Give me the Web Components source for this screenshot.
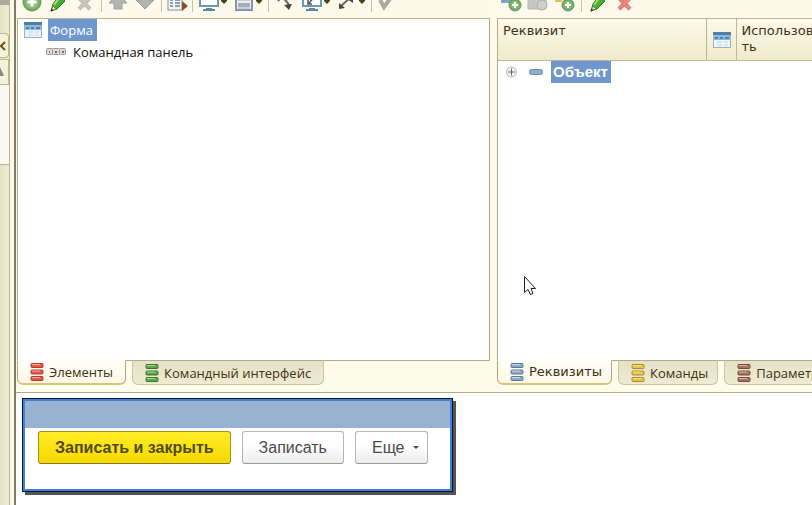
<!DOCTYPE html>
<html lang="ru">
<head>
<meta charset="utf-8">
<title>Форма</title>
<style>
html, body { height: 100%; margin: 0; overflow: hidden; }
body { font: 13px/16px "Open Sans", "Noto Sans", sans-serif; color: #413216; background: #fdfbea; }
</style>
</head>
<body>
<form-designer></form-designer>
<script>
const define = (name, html, init) => customElements.define(name, class extends HTMLElement {
  connectedCallback() {
    if (this.shadowRoot) return;
    const t = document.createElement('template');
    t.innerHTML = html;
    this.attachShadow({ mode: 'open' }).append(t.content.cloneNode(true));
    if (init) init(this, this.shadowRoot);
  }
});

const plus = (x, y, r) => `<circle cx="${x}" cy="${y}" r="${r}" fill="#72ab62" stroke="#6a9160"/><circle cx="${x}" cy="${y}" r="${r - 2}" fill="#8bbd79"/><path d="M${x - r / 2} ${y}h${r}M${x} ${y - r / 2}v${r}" stroke="#fff" stroke-width="${r > 8 ? 3 : 2}"/>`;
const pencil = '<path d="M5 4L11-4L17 1L9 9L3 11Z" fill="#48ad2c" stroke="#27771b"/><path d="M6 5L12-3" stroke="#a0dc79" stroke-width="2"/><path d="M3 11L5 6L8 9Z" fill="#e4d9b6" stroke="#58764b" stroke-width=".7"/><path d="M2.500 11.500l1-3 2 2z" fill="#243a1c"/>';
const cross = (a, b) => `<path d="M4 9L15-2M4-2L15 9" stroke="${b}" stroke-width="4"/><path d="M4 9L15-2M4-2L15 9" stroke="${a}" stroke-width="3"/>`;
const drop = '<path d="M22-1h6v2l-3 3l-3-3z" fill="#49421a"/>';
const monitor = '<rect x="1" y="-8" width="18" height="14" fill="#fff" stroke="#6c98b8" stroke-width="2"/><path d="M7 8h6v1h-6zM4 9h12v2H4z" fill="#6287a3"/>';
const icons = {
  add: plus(11, 2, 9),
  pencil,
  remove: cross('#c9c3b8', '#b9b5ab'),
  del: cross('#e8867b', '#d95f55'),
  up: '<path d="M6 9V3H1L10-7L19 3H14V9Z" fill="#b3b3b0" stroke="#a0a09c"/>',
  down: '<path d="M6-6V0H1L10 9L19 0H14V-6Z" fill="#b3b3b0" stroke="#a0a09c"/>',
  table: '<rect x="0" y="-5" width="14" height="15" fill="#f6f6f2" stroke="#7891a5"/><path d="M2 0h3m2 0h5M2 3h3m2 0h5M2 6h3m2 0h5" stroke="#8c9eb0" stroke-width="2"/><path d="M14 1l6 5-6 5z" fill="#8e4c2b"/>',
  monitor: monitor + drop,
  list: '<rect x="2" y="-6" width="16" height="16" fill="#eef0f1" stroke="#8299ad" stroke-width="2"/><path d="M4 0h12M4 8h12" stroke="#a4adb6"/><path d="M4 3h12v4H4z" fill="#a6adb5"/>' + drop,
  route: '<path d="M3 1Q6-3 9-1Q13 2 14 6" fill="none" stroke="#666" stroke-width="2"/><path d="M9 5l8-1-3 6z" fill="#4b4643"/>',
  screen: monitor + '<path d="M7 3L14-5M6 0v4h4" fill="none" stroke="#555" stroke-width="1.500"/>' + drop,
  diag: '<path d="M4 6L14-3" stroke="#666" stroke-width="2"/><path d="M2 9V3l6 5zM10-1l6-2v6z" fill="#4b4643"/>' + drop,
  check: '<path d="M2 0L6 7L14-4" fill="none" stroke="#aaa9a4" stroke-width="4"/>',
  addAttr: '<rect x="0" y="-3" width="12" height="6" fill="#7ea3c5"/>' + plus(14, 5, 6),
  copy: '<path d="M0-4h12l6 4v9H0z" fill="#c7c8c4" stroke="#b5b6b3"/><circle cx="14" cy="5" r="5" fill="#d0d0cb" stroke="#aaa"/>',
  addCol: '<rect x="0" y="-4" width="7" height="6" fill="#e4bf50"/><rect x="9" y="-4" width="7" height="5" fill="#dfa845"/>' + plus(13, 5, 6)
};

define('tool-button', `<style>
:host { display: block; flex: none; }
button { display: block; width: var(--w, 20px); height: 18px; padding: 0; border: 0; background: none; }
svg { display: block; width: 100%; height: 18px; overflow: visible; }
</style><button type="button"><svg></svg></button>`, (el, r) => {
  r.querySelector('svg').innerHTML = icons[el.getAttribute('icon')];
  r.querySelector('button').setAttribute('aria-label', el.getAttribute('label'));
});

define('tool-bar', `<style>
:host { display: flex; align-items: flex-start; gap: 7px; height: 18px; flex: none; padding-left: var(--start, 4px); overflow: hidden; border-bottom: 1px solid #b9b58d; background: #fdfaeb; }
::slotted(hr) { width: 1px; height: 12px; margin: 0 -1px; border: 0; background: #c9c3a0; flex: none; }
</style><slot></slot>`);

define('form-icon', `<style>:host { display: block; flex: none; width: 18px; height: 18px; } svg { display: block; }</style>
<svg width="18" height="18"><rect x=".5" y="1.500" width="17" height="15" fill="#eef5fa" stroke="#98b0c2"/><path d="M0 1h18v3H0z" fill="#507da4"/><path d="M1 4h16v5H1z" fill="#8db8dc"/><path d="M2 7h3m2 0h3m2 0h4" stroke="#4c86b8" stroke-width="2"/><path d="M4 11h5m2 0h4M4 14h5m2 0h4" stroke="#c3d1dd"/></svg>`);

define('panel-icon', `<style>:host { display: block; flex: none; width: 20px; height: 8px; } svg { display: block; }</style>
<svg width="20" height="8"><g fill="#ddd" stroke="#969696"><rect x=".5" y=".5" width="6" height="6" rx="1"/><rect x="6.500" y=".5" width="7" height="6" rx="1"/><rect x="13.500" y=".5" width="6" height="6" rx="1"/></g><path d="M3 3h1v2H3z" fill="#777"/><path d="M9 3h2v2H9z" fill="#d33"/><path d="M16 3h2v2h-2z" fill="#a55"/></svg>`);

define('tree-row', `<style>
:host { display: flex; align-items: center; height: 22px; gap: 6px; padding-left: var(--indent, 6px); color: #111; }
:host(:not([selected])) { gap: 5px; }
span { padding: 3px 4px 3px 2px; }
:host([selected]) span { background: #6f97cd; color: #fff; }
:host([strong]) span { font: bold 15px/16px "Liberation Sans", sans-serif; padding-right: 3px; }
</style><slot name="icon"></slot><span><slot></slot></span>`);

define('page-tab', `<style>
:host { display: block; flex: none; }
button { display: flex; align-items: center; gap: 5px; height: 25px; padding: 0 12px; border: 1px solid #c9c5a4; border-top-color: #b0ac88; border-radius: 0 0 6px 6px; background: linear-gradient(#e5e1c6, #efebd3); color: inherit; font: inherit; white-space: nowrap; }
:host([active]) button { border-color: #aaa47f; border-top-color: #fffdf4; border-bottom: 2px solid #d9c283; background: linear-gradient(#fffef8, #fdf7e4); }
:host([compact]) button { padding-right: 9px; }
svg { display: block; }
</style><button type="button" role="tab"><svg width="14" height="18"></svg><span><slot></slot></span></button>`, (el, r) => {
  const [a, b] = el.getAttribute('tone').split(' ');
  r.querySelector('svg').innerHTML = [0, 6.5, 13].map(y => `<rect x="1" y="${y + .5}" width="12" height="4" rx="1" fill="${a}" stroke="${b}"/><path d="M2 ${y + 1.5}h8" stroke="#fff" stroke-opacity=".5"/>`).join('');
  r.querySelector('button').setAttribute('aria-selected', el.hasAttribute('active'));
});

define('editor-pane', `<style>
:host { display: flex; flex-direction: column; min-width: 0; overflow: hidden; }
.body { flex: 1; border: 1px solid #b0ac88; border-top: 0; background: #fff; }
:host([last]) .body { border-right: 0; }
.tabs { display: flex; gap: 6px; margin-top: -1px; height: 32px; }
</style><slot name="tools"></slot><div class="body"><slot></slot></div><div class="tabs" role="tablist"><slot name="tab"></slot></div>`);

define('attr-header', `<style>
:host { display: block; }
table { width: 100%; border-collapse: collapse; table-layout: fixed; background: linear-gradient(#fcfaea, #efeacb); }
th { height: 37px; padding: 4px 0 0 5px; font: inherit; text-align: left; vertical-align: top; border-right: 1px solid #bbb699; border-bottom: 1px solid #bbb699; font-family: "DejaVu Sans", sans-serif; white-space: nowrap; }
th:nth-child(2) { padding: 0 6px; height: 41px; vertical-align: middle; }
th:last-child { border-right: 0; }
</style><table><colgroup><col><col style="width:30px"><col style="width:76px"></colgroup><thead><tr><th scope="col">Реквизит</th><th scope="col" aria-label="Форма"><form-icon></form-icon></th><th scope="col">Использов<br>ть</th></tr></thead></table>`);

define('side-strip', `<style>
:host { display: flex; flex-direction: column; box-sizing: border-box; border-right: 1px solid #b9b58d; background: linear-gradient(90deg, #e5e1c2, #f0edd8); overflow: hidden; }
.cap { height: 5px; background: #aaa99f; margin-bottom: 28px; flex: none; }
button { flex: none; height: 25px; padding: 0; border: 1px solid #bdb892; border-left: 0; border-radius: 0 4px 4px 0; background: #f5f2dc; }
.up { border-radius: 0; margin-top: 1px; height: 26px; }
svg { display: block; }
.track { height: 79px; border-bottom: 1px solid #bdb892; background: #fbf9f1; }
</style><div class="cap"></div><button type="button" aria-label="Свернуть"><svg width="8" height="10"><path d="M5 1L1 5L5 9" fill="none" stroke="#6e5522" stroke-width="2"/></svg></button>
<button type="button" class="up" aria-label="Вверх"><svg width="8" height="10"><path d="M0 0l4 9H-4z" fill="#8b897c"/></svg></button><div class="track"></div>`);

define('command-button', `<style>
:host { display: block; }
button { display: flex; align-items: center; gap: 8px; height: 33px; padding: 0 16px; border: 1px solid #b5b5b5; border-bottom-color: #999; border-radius: 3px; background: linear-gradient(#fff 40%, #ececec); color: #4b4b4b; font: 16px/20px "Liberation Sans", sans-serif; white-space: nowrap; }
:host([primary]) button { border-color: #a39410; border-bottom-color: #827719; background: linear-gradient(#ffec28, #f8d900); color: #504a18; font-weight: bold; }
svg { display: none; }
:host([menu]) svg { display: block; }
:host([menu]) button { padding-right: 8px; }
</style><button type="button"><slot></slot><svg width="6" height="4"><path d="M0 0h6L3 3z" fill="#444"/></svg></button>`);

define('form-preview', `<style>
:host { display: block; max-width: 429px; border: 1px solid #06143c; box-shadow: 3px 3px 0 #575454; background: #fff; }
.frame { border: 2px solid #3f83d2; }
.title { height: 27px; background: #9ab2d1; }
.commands { display: flex; padding: 3px 13px 25px; gap: 11px; }
</style><div class="frame"><div class="title"></div><div class="commands"><slot></slot></div></div>`);

define('mouse-pointer', `<style>:host { position: absolute; left: 524px; top: 276px; pointer-events: none; } svg { display: block; }</style>
<svg width="13" height="20"><path d="M.5.500V16.500L4 13.500L6.500 18.500L9 17.500L7 12.500H11.500Z" fill="#fff" stroke="#222"/></svg>`);

define('form-designer', `<style>
:host { display: grid; grid-template-columns: 10px 1fr; height: 100vh; gap: 4px; overflow: hidden; background: #fdf9e4; }
main { display: flex; flex-direction: column; min-width: 0; border-left: 2px solid #807b6b; }
.panes { flex: 1; min-height: 0; display: grid; grid-template-columns: 473fr 315fr; gap: 7px; padding-left: 1px; background: #fdfbea; border-bottom: 1px solid #b0ac88; }
.preview { background: #fff; padding: 5px 6px 13px; }
.wide { font-family: "DejaVu Sans", sans-serif; }
</style>
<side-strip></side-strip>
<main>
<div class="panes">
<editor-pane>
<tool-bar slot="tools">
<tool-button icon="add" label="Добавить"></tool-button><tool-button icon="pencil" label="Изменить"></tool-button><tool-button icon="remove" label="Удалить"></tool-button><hr>
<tool-button icon="up" label="Вверх"></tool-button><tool-button icon="down" label="Вниз"></tool-button><hr>
<tool-button icon="table" label="Свойства" style="--w:18px"></tool-button><hr>
<tool-button icon="monitor" label="Экран" style="--w:28px"></tool-button><tool-button icon="list" label="Список" style="--w:28px"></tool-button><hr>
<tool-button icon="route" label="Порядок"></tool-button><tool-button icon="screen" label="Просмотр" style="--w:28px"></tool-button><tool-button icon="diag" label="Размер" style="--w:28px"></tool-button><hr>
<tool-button icon="check" label="Проверить"></tool-button>
</tool-bar>
<tree-row selected><form-icon slot="icon"></form-icon>Форма</tree-row>
<tree-row style="--indent:28px"><panel-icon slot="icon"></panel-icon>Командная панель</tree-row>
<page-tab slot="tab" active tone="#e8584a #b9382d">Элементы</page-tab>
<page-tab slot="tab" tone="#5fa944 #39752a">Командный интерфейс</page-tab>
</editor-pane>
<editor-pane last>
<tool-bar slot="tools">
<tool-button icon="addAttr" label="Добавить реквизит"></tool-button><tool-button icon="copy" label="Скопировать"></tool-button><tool-button icon="addCol" label="Добавить колонку"></tool-button><hr>
<tool-button icon="pencil" label="Изменить"></tool-button><tool-button icon="del" label="Удалить"></tool-button>
</tool-bar>
<attr-header></attr-header>
<tree-row selected strong style="--indent:7px"><svg slot="icon" width="40" height="14"><circle cx="6.500" cy="7" r="5" fill="#f2f2ef" stroke="#b5b5ae"/><path d="M3 7h7M6.500 3.500v7" stroke="#666"/><rect x="24.500" y="4.500" width="13" height="5" rx="2" fill="#8eb2ce" stroke="#6589a6"/></svg>Объект</tree-row>
<page-tab slot="tab" active compact class="wide" tone="#8eabc4 #587b99">Реквизиты</page-tab>
<page-tab slot="tab" compact tone="#e3c744 #ad8e26">Команды</page-tab>
<page-tab slot="tab" compact tone="#a87561 #774637">Параметры</page-tab>
</editor-pane>
</div>
<div class="preview">
<form-preview>
<command-button primary>Записать и закрыть</command-button>
<command-button>Записать</command-button>
<command-button menu>Еще</command-button>
</form-preview>
</div>
</main>
<mouse-pointer></mouse-pointer>`);
</script>
</body>
</html>
